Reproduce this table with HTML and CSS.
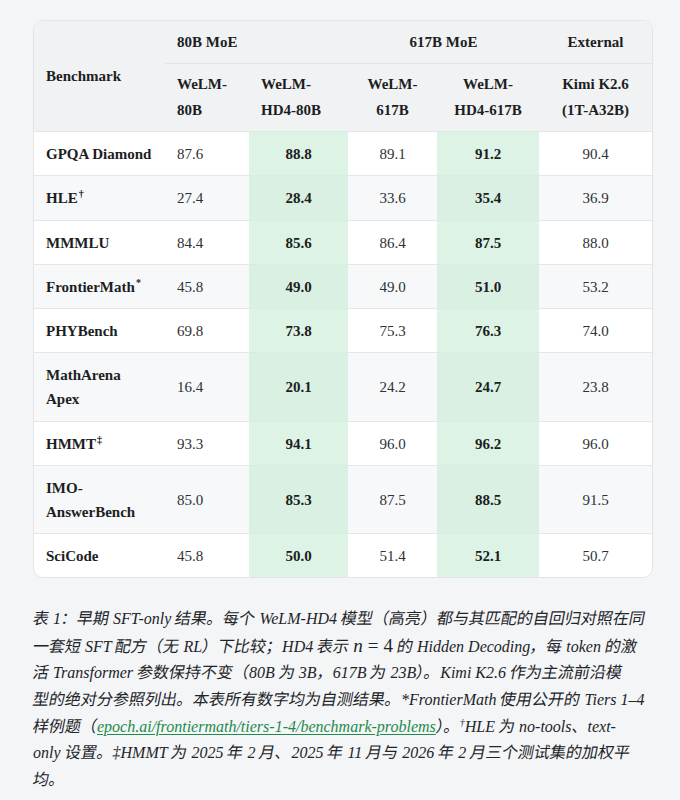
FILE: index.html
```html
<!DOCTYPE html>
<html lang="zh">
<head>
<meta charset="utf-8">
<link rel="stylesheet" href="styles.css">
</head>
<body>
<div class="page">
  <div class="card">
    <table class="bench">
      <colgroup>
        <col class="c-name"><col class="c-a"><col class="c-b"><col class="c-c"><col class="c-d"><col class="c-e">
      </colgroup>
      <thead>
        <tr class="group">
          <th rowspan="2" class="name-h">Benchmark</th>
          <th colspan="2" class="left g-line">80B MoE</th>
          <th colspan="2" class="center g-line">617B MoE</th>
          <th class="center g-line">External</th>
        </tr>
        <tr class="models">
          <th class="left">WeLM-<br>80B</th>
          <th class="left">WeLM-<br>HD4-80B</th>
          <th class="center">WeLM-<br>617B</th>
          <th class="center">WeLM-<br>HD4-617B</th>
          <th class="center">Kimi K2.6<br>(1T-A32B)</th>
        </tr>
      </thead>
      <tbody>
        <tr><th>GPQA Diamond</th><td class="left">87.6</td><td class="hl">88.8</td><td>89.1</td><td class="hl">91.2</td><td>90.4</td></tr>
        <tr class="alt"><th>HLE<sup>†</sup></th><td class="left">27.4</td><td class="hl">28.4</td><td>33.6</td><td class="hl">35.4</td><td>36.9</td></tr>
        <tr><th>MMMLU</th><td class="left">84.4</td><td class="hl">85.6</td><td>86.4</td><td class="hl">87.5</td><td>88.0</td></tr>
        <tr class="alt"><th>FrontierMath<sup>*</sup></th><td class="left">45.8</td><td class="hl">49.0</td><td>49.0</td><td class="hl">51.0</td><td>53.2</td></tr>
        <tr><th>PHYBench</th><td class="left">69.8</td><td class="hl">73.8</td><td>75.3</td><td class="hl">76.3</td><td>74.0</td></tr>
        <tr class="alt"><th>MathArena<br>Apex</th><td class="left">16.4</td><td class="hl">20.1</td><td>24.2</td><td class="hl">24.7</td><td>23.8</td></tr>
        <tr><th>HMMT<sup>‡</sup></th><td class="left">93.3</td><td class="hl">94.1</td><td>96.0</td><td class="hl">96.2</td><td>96.0</td></tr>
        <tr class="alt"><th>IMO-<br>AnswerBench</th><td class="left">85.0</td><td class="hl">85.3</td><td>87.5</td><td class="hl">88.5</td><td>91.5</td></tr>
        <tr class="last"><th>SciCode</th><td class="left">45.8</td><td class="hl">50.0</td><td>51.4</td><td class="hl">52.1</td><td>50.7</td></tr>
      </tbody>
    </table>
  </div>
  <p class="caption"><span class="cj">表</span> 1<span class="cj">：早期</span> SFT-only <span class="cj">结果。每个</span> WeLM-HD4 <span class="cj">模型（高亮）都与其匹配的自回归对照在同</span><br><span class="cj">一套短</span> SFT <span class="cj">配方（无</span> RL<span class="cj">）下比较；</span>HD4 <span class="cj">表示</span> <span class="math"><span class="mi">n</span><span class="eq">=</span>4</span> <span class="cj">的</span> Hidden Decoding<span class="cj">，每</span> token <span class="cj">的激</span><br><span class="cj">活</span> Transformer <span class="cj">参数保持不变（</span>80B <span class="cj">为</span> 3B<span class="cj">，</span>617B <span class="cj">为</span> 23B<span class="cj">）。</span>Kimi K2.6 <span class="cj">作为主流前沿模</span><br><span class="cj">型的绝对分参照列出。本表所有数字均为自测结果。</span>*FrontierMath <span class="cj">使用公开的</span> Tiers 1–4<br><span class="cj">样例题（</span><a class="link" href="#">epoch.ai/frontiermath/tiers-1-4/benchmark-problems</a><span class="cj">）。</span><sup class="cs">†</sup>HLE <span class="cj">为</span> no-tools<span class="cj">、</span>text-<br>only <span class="cj">设置。</span>‡HMMT <span class="cj">为</span> 2025 <span class="cj">年</span> 2 <span class="cj">月、</span>2025 <span class="cj">年</span> 11 <span class="cj">月与</span> 2026 <span class="cj">年</span> 2 <span class="cj">月三个测试集的加权平</span><br><span class="cj">均。</span></p>
</div>
</body>
</html>
```

FILE: styles.css
```css
html, body {
  margin: 0;
  padding: 0;
  background: #f4f5f7;
}

.page {
  padding: 20px 27px 0 33px;
  font-family: "Liberation Serif", "Noto Sans CJK SC", serif;
  color: #1f2226;
}

.card {
  background: #ffffff;
  border: 1px solid #e3e5e9;
  border-radius: 10px;
  overflow: hidden;
}

.bench {
  width: 100%;
  border-collapse: collapse;
  table-layout: fixed;
  font-size: 15px;
  line-height: 24px;
}

.c-name { width: 131px; }
.c-a { width: 84px; }
.c-b { width: 99px; }
.c-c { width: 89px; }
.c-d { width: 102px; }
.c-e { width: auto; }

.bench thead th {
  background: #f1f2f4;
  font-weight: bold;
  color: #1c1e22;
  padding: 9px 12px 9px;
  vertical-align: middle;
}

.bench thead tr.models th {
  line-height: 26px;
  padding: 7px 12px 8px;
}

.bench .name-h {
  text-align: left;
  padding-left: 12px;
  vertical-align: middle;
}

.bench .g-line {
  border-bottom: 1px solid #e1e3e7;
}

.bench .left { text-align: left; }
.bench .center { text-align: center; }

.bench tbody th {
  text-align: left;
  font-weight: bold;
  padding: 10px 12px 9.25px;
  color: #1c1e22;
  border-top: 1px solid #e4e6ea;
}

.bench tbody td {
  text-align: center;
  padding: 10px 12px 9.25px;
  color: #2e3135;
  border-top: 1px solid #e4e6ea;
}

.bench tbody td.left { text-align: left; }

.bench tbody tr.alt th,
.bench tbody tr.alt td {
  background: #f7f8fa;
}

.bench tbody td.hl {
  background: #dcf3e5;
  font-weight: bold;
  color: #1c1e22;
  border-top-color: #d6efdf;
}

.bench tbody tr.alt td.hl {
  background: #d9f0e2;
}

.bench sup {
  font-size: 10px;
  line-height: 0;
  vertical-align: 6px;
  margin-left: 1px;
}

.caption {
  margin: 28px 0 0;
  font-style: italic;
  font-size: 16px;
  line-height: 26.6px;
  color: #222428;
  white-space: nowrap;
}

.cj {
  display: inline-block;
  font-style: normal;
  transform: skewX(-11deg);
}

.math {
  font-style: normal;
  font-size: 19px;
}

.math .mi {
  font-style: italic;
}

.math .eq {
  margin: 0 5px;
}

.link {
  color: #1e8a4c;
  text-decoration: underline;
  text-underline-offset: 2px;
}

.cs {
  font-size: 10px;
  line-height: 0;
  vertical-align: 6px;
}
```
